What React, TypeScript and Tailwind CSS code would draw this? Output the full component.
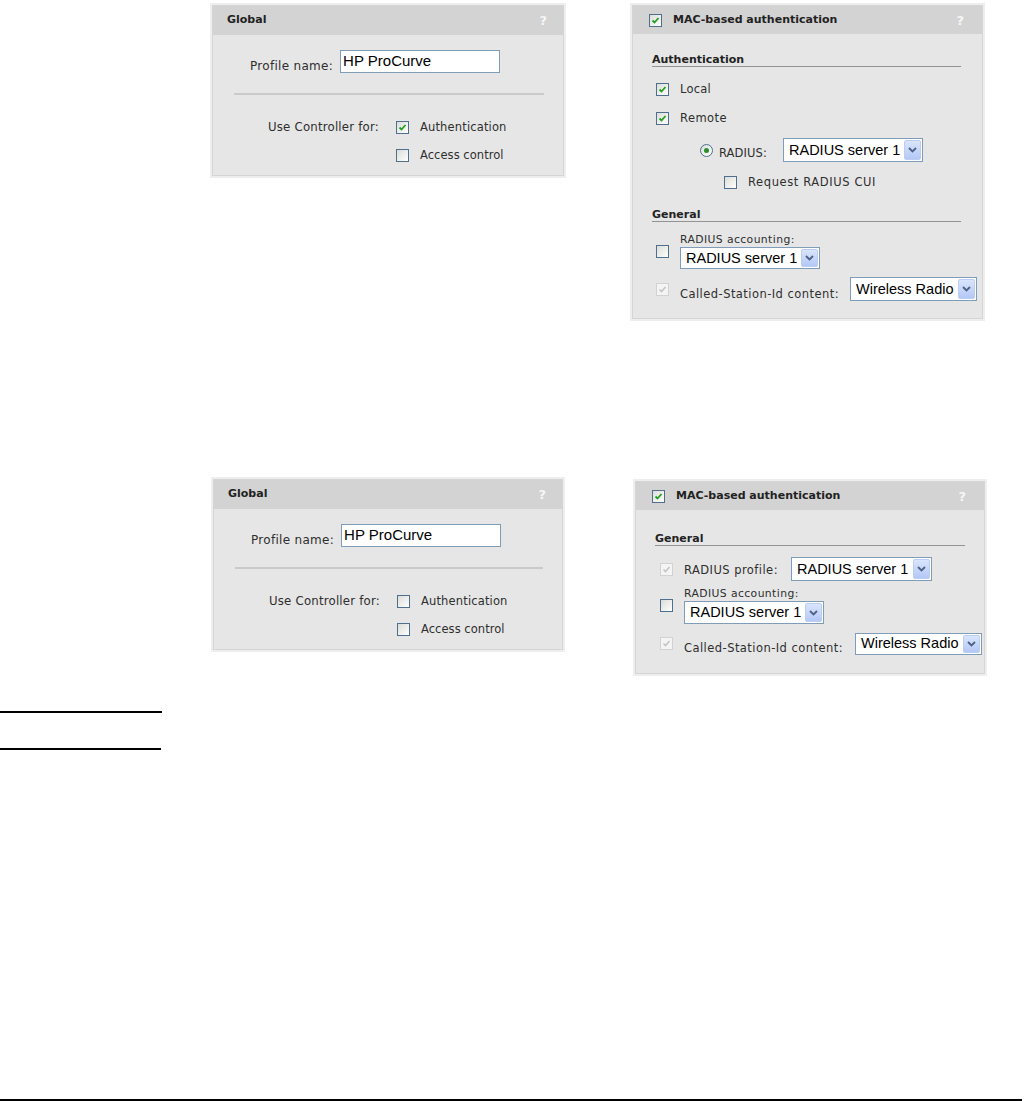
import React from "react";

const sans = "font-['DejaVu_Sans',Verdana,sans-serif]";
const arial = "font-['Liberation_Sans',Arial,sans-serif]";

function Check({ checked, disabled }: { checked?: boolean; disabled?: boolean }) {
  if (disabled) {
    return (
      <span className="w-[13px] h-[13px] shrink-0 border border-[#d2d2d2] bg-[#f4f4f4] flex items-center justify-center">
        {checked && (
          <svg width="11" height="11" viewBox="0 0 11 11">
            <path d="M2.5 5.5 L4.5 7.5 L8.5 3" stroke="#c4c4c4" strokeWidth="1.6" fill="none" />
          </svg>
        )}
      </span>
    );
  }
  return (
    <span className="w-[13px] h-[13px] shrink-0 border border-[#4f6f8f] bg-linear-to-br from-[#dcdcd7] to-white flex items-center justify-center">
      {checked && (
        <svg width="11" height="11" viewBox="0 0 11 11">
          <path d="M2.5 5.5 L4.5 7.5 L8.5 3" stroke="#21a121" strokeWidth="1.8" fill="none" />
        </svg>
      )}
    </span>
  );
}

function Radio() {
  return (
    <span className="w-[13px] h-[13px] shrink-0 rounded-full border border-[#4f6f8f] bg-linear-to-br from-[#dcdcd7] to-white flex items-center justify-center">
      <span className="w-[5px] h-[5px] rounded-full bg-[#2a8f2a]" />
    </span>
  );
}

function Select({ cls, text }: { cls: string; text: string }) {
  return (
    <div className={`${cls} shrink-0 flex items-stretch border border-[#7f9db9] bg-white p-[1px] tracking-normal`}>
      <span className={`flex-1 overflow-hidden whitespace-nowrap pl-[4px] ${arial} text-[14.5px] tracking-normal leading-none flex items-center text-black`}>
        {text}
      </span>
      <span className="w-[17px] shrink-0 flex items-center justify-center rounded-[2px] border border-[#bccdf3] bg-linear-to-b from-[#dae5fd] to-[#b4c8f6]">
        <svg width="9" height="6" viewBox="0 0 9 6">
          <path d="M1 1 L4.5 4.5 L8 1" stroke="#4d6185" strokeWidth="1.8" fill="none" />
        </svg>
      </span>
    </div>
  );
}

function Panel({ cls, children }: { cls: string; children: React.ReactNode }) {
  return (
    <div className={`${cls} border-2 border-[#eeeeee]`}>
      <div className="border border-[#d5d5d5] bg-[#e6e6e6] flex flex-col">{children}</div>
    </div>
  );
}

function Question() {
  return <span className={`${sans} text-[13px] font-bold text-[#f6f6f6] leading-none`}>?</span>;
}

function GlobalPanel({ cls, auth }: { cls: string; auth: boolean }) {
  return (
    <Panel cls={cls}>
      <div className="h-[29px] bg-[#d3d3d3] flex items-center justify-between pl-[14px] pr-[16px]">
        <span className={`${sans} text-[11px] font-bold text-[#222]`}>Global</span>
        <Question />
      </div>
      <div className={`flex flex-col pt-[15px] pb-[10px] ${sans} text-[#2e2e2e]`}>
        <div className="flex items-end pl-[37px]">
          <span className="text-[12px] tracking-[0.3px] leading-[14px] mr-[7px]">Profile name:</span>
          <div className={`w-[160px] h-[23px] border border-[#7f9db9] bg-white flex items-center pl-[2px] ${arial} text-[15px] text-black`}>
            HP ProCurve
          </div>
        </div>
        <div className="mt-[20px] ml-[21px] mr-[19px] h-[2px] bg-[#cacaca]" />
        <div className="mt-[22px] h-[20px] flex items-center pl-[55px]">
          <span className="w-[128px] text-[11.75px] tracking-[0.2px] leading-[14px]">Use Controller for:</span>
          <Check checked={auth} />
          <span className="ml-[11px] text-[11.5px] tracking-[0.15px] leading-[14px]">Authentication</span>
        </div>
        <div className="mt-[8px] h-[20px] flex items-center pl-[183px]">
          <Check />
          <span className="ml-[11px] text-[11.5px] tracking-[0.05px] leading-[14px]">Access control</span>
        </div>
      </div>
    </Panel>
  );
}

function Section({ cls, text }: { cls: string; text: string }) {
  return (
    <div className={`${cls} border-b border-[#939393] ${sans} text-[11px] font-bold leading-[13px] text-[#222]`}>{text}</div>
  );
}

function MacHeader() {
  return (
    <div className="h-[28px] bg-[#d3d3d3] flex items-center justify-between pl-[16px] pr-[18px]">
      <div className="flex items-center">
        <Check checked />
        <span className={`ml-[11px] ${sans} text-[11px] font-bold text-[#222]`}>MAC-based authentication</span>
      </div>
      <Question />
    </div>
  );
}

export default function App() {
  return (
    <div className="w-[1025px] h-[1101px] bg-white flex flex-col overflow-hidden">
      <div className="flex items-start pt-[3px] pl-[210px] gap-[64px]">
        <GlobalPanel cls="w-[356px]" auth />
        <Panel cls="w-[355px]">
          <MacHeader />
          <div className={`flex flex-col pt-[19px] pb-[17px] ${sans} text-[#2e2e2e] text-[11.5px]`}>
            <Section cls="ml-[19px] mr-[21px]" text="Authentication" />
            <div className="mt-[12px] h-[20px] flex items-center pl-[23px]">
              <Check checked />
              <span className="ml-[11px] leading-[14px] tracking-[0.2px]">Local</span>
            </div>
            <div className="mt-[9px] h-[20px] flex items-center pl-[23px]">
              <Check checked />
              <span className="ml-[11px] leading-[14px] tracking-[0.45px]">Remote</span>
            </div>
            <div className="mt-[10px] h-[24px] flex items-center pl-[67px]">
              <Radio />
              <span className="ml-[6px] w-[64px] pt-[5px] leading-[14px] tracking-[0.1px]">RADIUS:</span>
              <Select cls="w-[140px] h-[24px]" text="RADIUS server 1" />
            </div>
            <div className="mt-[10px] h-[20px] flex items-center pl-[91px]">
              <Check />
              <span className="ml-[11px] leading-[14px] tracking-[0.6px]">Request RADIUS CUI</span>
            </div>
            <Section cls="mt-[16px] ml-[19px] mr-[21px]" text="General" />
            <div className="mt-[11px] flex items-center pl-[23px]">
              <Check />
              <div className="ml-[11px] flex flex-col">
                <span className="leading-[13px] mb-[1px] text-[10.8px] tracking-[0.4px]">RADIUS accounting:</span>
                <Select cls="w-[140px] h-[22px]" text="RADIUS server 1" />
              </div>
            </div>
            <div className="mt-[8px] flex items-center pl-[23px]">
              <Check checked disabled />
              <span className="ml-[11px] w-[170px] pt-[10px] leading-[13px] tracking-[0.45px] whitespace-nowrap">Called-Station-Id content:</span>
              <Select cls="w-[127px] h-[24px]" text="Wireless Radio" />
            </div>
          </div>
        </Panel>
      </div>

      <div className="flex items-start mt-[156px] pl-[211px] gap-[68px]">
        <GlobalPanel cls="w-[354px]" auth={false} />
        <Panel cls="w-[354px] mt-[2px]">
          <MacHeader />
          <div className={`flex flex-col pt-[22px] pb-[18px] ${sans} text-[#2e2e2e] text-[11.5px]`}>
            <Section cls="ml-[19px] mr-[19px]" text="General" />
            <div className="mt-[11px] h-[24px] flex items-center pl-[24px]">
              <Check checked disabled />
              <span className="ml-[11px] w-[107px] pt-[2px] leading-[14px] tracking-[0.45px] whitespace-nowrap">RADIUS profile:</span>
              <Select cls="w-[141px] h-[24px]" text="RADIUS server 1" />
            </div>
            <div className="mt-[6px] flex items-center pl-[24px]">
              <Check />
              <div className="ml-[11px] flex flex-col">
                <span className="leading-[13px] mb-[1px] text-[10.8px] tracking-[0.4px]">RADIUS accounting:</span>
                <Select cls="w-[140px] h-[23px]" text="RADIUS server 1" />
              </div>
            </div>
            <div className="mt-[8px] flex items-center pl-[24px]">
              <Check checked disabled />
              <span className="ml-[11px] w-[171px] pt-[10px] leading-[13px] tracking-[0.45px] whitespace-nowrap">Called-Station-Id content:</span>
              <Select cls="w-[127px] h-[22px]" text="Wireless Radio" />
            </div>
          </div>
        </Panel>
      </div>

      <div className="mt-[35px] w-[162px] h-[2px] bg-black shrink-0" />
      <div className="mt-[35px] w-[161px] h-[2px] bg-black shrink-0" />
      <div className="mt-[349px] w-[1022px] h-[2px] bg-black shrink-0" />
    </div>
  );
}
